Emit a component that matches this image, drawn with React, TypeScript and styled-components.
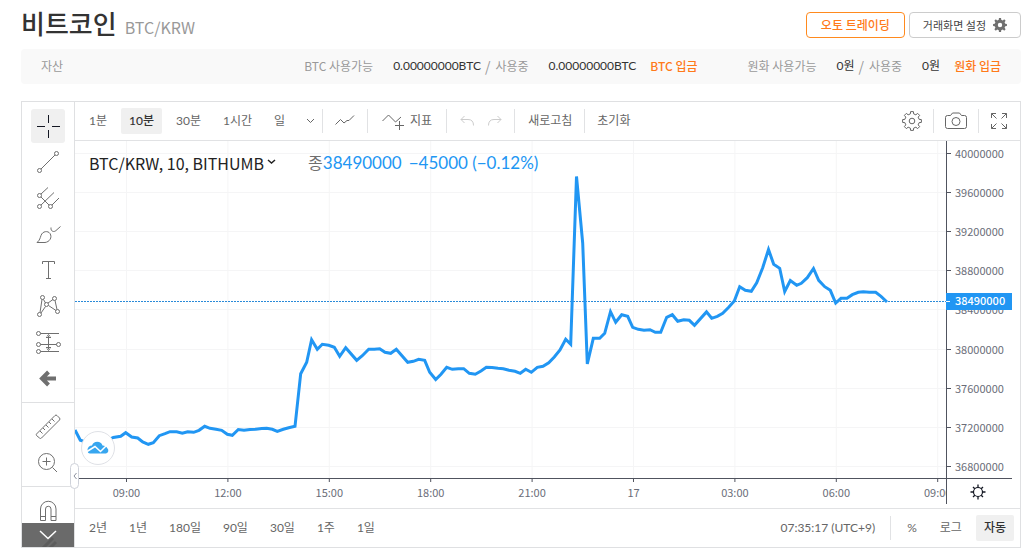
import React from "react";
import styled, { createGlobalStyle, css } from "styled-components";

const colors = {
  line: "#e1e2e4",
  frame: "#dfe0e2",
  grid: "#f5f5f6",
  icon: "#6f6f6f",
  text: "#666",
  muted: "#999",
  orange: "#ff7a1a",
  blue: "#2196f3",
  axis: "#50535e",
};

const GlobalStyle = createGlobalStyle`
  * { box-sizing: border-box; }
  body {
    margin: 0;
    background: #fff;
    color: #333;
    font: 12px/16px "Noto Sans CJK KR", "Noto Sans", sans-serif;
  }
  button { font: inherit; color: inherit; background: none; border: 0; padding: 0; cursor: pointer; }
  a { text-decoration: none; }
  svg { display: block; }
`;

const Page = styled.div`
  padding: 0 9px 12px 21px;
`;

const Header = styled.header`
  display: flex;
  align-items: center;
  justify-content: space-between;
  height: 49px;
`;

const Title = styled.h1`
  display: flex;
  align-items: baseline;
  gap: 8px;
  margin: 0;
  font-size: 26px;
  line-height: 40px;
  font-weight: 500;
  color: #333;
  small {
    font-size: 16px;
    font-weight: 400;
    color: ${colors.muted};
  }
`;

const Actions = styled.div`
  display: flex;
  gap: 4px;
`;

const OutlineButton = styled.button<{ $accent?: boolean }>`
  display: flex;
  align-items: center;
  gap: 7px;
  height: 26px;
  padding: 0 ${(p) => (p.$accent ? 14 : 13)}px;
  border: 1px solid ${(p) => (p.$accent ? "#ff8a1e" : "#ccc")};
  border-radius: 4px;
  background: #fff;
  color: ${(p) => (p.$accent ? colors.orange : "#444")};
  font-size: ${(p) => (p.$accent ? 12 : 11)}px;
  font-weight: ${(p) => (p.$accent ? 500 : 400)};
`;

const AssetBar = styled.section`
  display: flex;
  align-items: center;
  height: 35px;
  padding: 0 20px 2px;
  border-radius: 4px;
  background: #f9f9f9;
  color: ${colors.muted};
  h2 {
    margin: 0 auto 0 0;
    font-size: 12px;
    font-weight: 400;
  }
`;

const AssetGroup = styled.div`
  display: flex;
  align-items: center;
  & + & { margin-left: 50px; }
`;

const Slash = styled.span`
  margin: 0 5px 0 4px;
  font-size: 14px;
`;

const Amount = styled.strong`
  margin-left: 20px;
  font-family: Lato, "Noto Sans CJK KR", sans-serif;
  font-weight: 400;
  color: #333;
`;

const DepositLink = styled.a`
  margin-left: 14px;
  color: ${colors.orange};
  font-weight: 500;
`;

const Widget = styled.main`
  display: flex;
  margin-top: 17px;
  border: 1px solid ${colors.frame};
`;

const Tools = styled.nav`
  position: relative;
  flex: none;
  width: 53px;
  height: 445px;
  padding-top: 7px;
  overflow: hidden;
  border-right: 1px solid ${colors.frame};
`;

const ToolGroup = styled.div`
  display: flex;
  flex-direction: column;
  align-items: center;
  gap: 2px;
  padding-bottom: 7px;
  & + & {
    padding-top: 6px;
    border-top: 1px solid ${colors.frame};
  }
`;

const ToolButton = styled.button<{ $active?: boolean }>`
  display: grid;
  place-items: center;
  width: 34px;
  height: 34px;
  border-radius: 3px;
  color: ${(p) => (p.$active ? "#131722" : colors.icon)};
  background: ${(p) => (p.$active ? "#f0f0f0" : "none")};
`;

const MoreTools = styled.button`
  position: absolute;
  left: 0;
  right: 0;
  bottom: 0;
  display: grid;
  place-items: center;
  height: 24px;
  background: rgba(90, 90, 90, 0.9);
  color: #fff;
`;

const Main = styled.div`
  position: relative;
  flex: 1;
  min-width: 0;
`;

const TopBar = styled.div`
  display: flex;
  align-items: center;
  height: 39px;
  padding: 0 4px 0 6px;
  border-bottom: 1px solid ${colors.line};
  color: ${colors.text};
`;

const Intervals = styled.div`
  display: flex;
  align-items: center;
  gap: 6px;
`;

const BarButton = styled.button<{ $active?: boolean; $pad?: number }>`
  display: flex;
  align-items: center;
  gap: 6px;
  height: 26px;
  padding: 0 ${(p) => p.$pad ?? 8}px;
  border-radius: 2px;
  font-family: Lato, "Noto Sans CJK KR", sans-serif;
  font-weight: ${(p) => (p.$active ? 500 : 400)};
  color: ${(p) => (p.$active ? "#333" : colors.text)};
  background: ${(p) => (p.$active ? "#f0f0f0" : "none")};
`;

const Divider = styled.span<{ $gap?: number }>`
  width: 1px;
  height: 24px;
  margin: 0 ${(p) => p.$gap ?? 4}px;
  background: ${colors.line};
`;

const Spacer = styled.span`
  flex: 1;
`;

const PlotRow = styled.div`
  position: relative;
  display: grid;
  grid-template-columns: minmax(0, 1fr) 66px;
  grid-template-rows: 338px 29px;
  padding-right: 8px;
  svg text {
    font-family: "Noto Sans CJK KR", sans-serif;
    font-size: 11px;
    fill: #6a6d78;
  }
`;

const Legend = styled.div`
  position: absolute;
  top: 10px;
  left: 14px;
  display: flex;
  align-items: center;
  font-family: Lato, "Noto Sans CJK KR", sans-serif;
  font-size: 17px;
  line-height: 24px;
  color: ${colors.blue};
  white-space: pre;
`;

const SymbolButton = styled.button`
  display: flex;
  align-items: center;
  gap: 3px;
  margin-right: 32px;
  font-family: "Noto Sans CJK KR", sans-serif;
  font-size: 16px;
  color: #222;
`;

const CloseLabel = styled.span`
  font-size: 16px;
  color: ${colors.icon};
`;

const Change = styled.span`
  margin-left: 7px;
`;

const LogoBadge = styled.a`
  position: absolute;
  left: 6px;
  top: 290px;
  display: grid;
  place-items: center;
  width: 34px;
  height: 34px;
  border: 1px solid #dfe1e6;
  border-radius: 50%;
  background: #fff;
`;

const CollapseHandle = styled.button`
  position: absolute;
  left: -5px;
  top: 361px;
  display: grid;
  place-items: center;
  width: 9px;
  height: 26px;
  border: 1px solid #cfd2da;
  border-radius: 5px;
  background: #fff;
  color: #8a8f9c;
`;

const AxisSettings = styled.button`
  display: grid;
  place-items: center;
  padding-right: 3px;
  color: #131722;
`;

const BottomBar = styled.div`
  display: flex;
  align-items: center;
  height: 39px;
  padding: 0 6px;
  border-top: 1px solid ${colors.line};
  color: ${colors.text};
`;

const iconBase = css`
  fill: none;
  stroke: currentColor;
`;

const Drawing = styled.svg`
  ${iconBase}
`;

type IconProps = { w?: number; h?: number; children: React.ReactNode };

const Icon = ({ w = 28, h = 28, children }: IconProps) => (
  <Drawing width={w} height={h} viewBox={`0 0 ${w} ${h}`} aria-hidden="true">
    {children}
  </Drawing>
);

const cogPath = (c: number, teeth: number, outer: number, inner: number) => {
  const pts: string[] = [];
  const step = (Math.PI * 2) / teeth;
  for (let i = 0; i < teeth; i++) {
    const a = i * step - Math.PI / 2;
    [
      [-0.29, inner],
      [-0.19, outer],
      [0.19, outer],
      [0.29, inner],
    ].forEach(([k, r]) => {
      pts.push(`${(c + r * Math.cos(a + k * step)).toFixed(2)} ${(c + r * Math.sin(a + k * step)).toFixed(2)}`);
    });
  }
  return `M${pts.join("L")}Z`;
};

const tools: { name: string; icon: React.ReactNode }[][] = [
  [
    { name: "십자선", icon: <path d="M14.5 3v8M14.5 18v8M3 14.5h8M18 14.5h8" /> },
    {
      name: "추세줄",
      icon: (
        <>
          <circle cx="5.5" cy="22.5" r="2" />
          <circle cx="22.5" cy="5.5" r="2" />
          <path d="M7 21L21 7" />
        </>
      ),
    },
    {
      name: "피치포크",
      icon: (
        <>
          <circle cx="5.5" cy="11.5" r="2" />
          <circle cx="5.5" cy="22.5" r="2" />
          <circle cx="16.5" cy="22.5" r="2" />
          <path d="M7 10l7-6.5M7 21L20 8.5M7 13l8 8M18 21l7-7" />
        </>
      ),
    },
    {
      name: "브러시",
      icon: (
        <path d="M3 22.500C6 20 6 18 7 15.500C8.500 11 14 10.500 16 13.500C18.500 17.500 15.500 22 11 22.500ZM17 7.500C16.500 11.500 20 12.500 22 10.500L26.500 6.500" />
      ),
    },
    { name: "텍스트", icon: <path d="M8.500 8V5.500h12V8M14.500 5.500v17M12 22.500h5" /> },
    {
      name: "패턴",
      icon: (
        <>
          <circle cx="5.500" cy="22.500" r="2" />
          <circle cx="8.500" cy="5.500" r="2" />
          <circle cx="12.500" cy="12.500" r="2" />
          <circle cx="20.500" cy="6.500" r="2" />
          <circle cx="23.500" cy="19.500" r="2" />
          <path d="M6 20.500L8 7.500M9.500 7.500l2 3.500M14 11l5-3.500M21 8.500l2 9M14.500 13.500l7.500 5M7 21l4.500-6.500" />
        </>
      ),
    },
    {
      name: "예측",
      icon: (
        <>
          <circle cx="4.500" cy="5.500" r="2" />
          <circle cx="4.500" cy="16.500" r="2" />
          <circle cx="24.500" cy="16.500" r="2" />
          <circle cx="4.500" cy="23.500" r="2" />
          <path d="M6.500 5.500H25M6.500 16.500h16M6.500 23.500H25M14.500 8v13M12 9.500h5M13 8.500l1.500-2 1.500 2M12 19.500h5M13 20.500l1.500 2 1.500-2" />
        </>
      ),
    },
    {
      name: "뒤로",
      icon: <path d="M14.500 8L8 14.500l6.500 6.500M9 14.500h13" strokeWidth="4" />,
    },
  ],
  [
    {
      name: "자",
      icon: (
        <path d="M2.500 22L21 3.500Q22 2.500 23 3.500L25.500 6Q26.500 7 25.500 8L7.500 26Q6.500 27 5.500 26L2.500 23.500Q2 22.500 2.500 22ZM6 19l2.500 2.500M9 16l2 2M12 13l2.500 2.500M15 10l2 2M18 7l2.500 2.500" />
      ),
    },
    {
      name: "확대",
      icon: (
        <>
          <circle cx="12.500" cy="13.500" r="8" />
          <path d="M18.500 19.500l4.500 4.500M12.500 9.500v8M8.500 13.500h8" />
        </>
      ),
    },
  ],
  [
    {
      name: "자석",
      icon: (
        <path d="M6.500 24.500V13a7.500 7.500 0 0 1 15.500 0v11.500h-5V13a2.700 2.700 0 0 0-5.500 0v11.500ZM6.500 20.500h5M17 20.500h5" />
      ),
    },
    { name: "그리기 유지", icon: <path d="M3 22L19 6M7 25L22 10" strokeWidth="3" /> },
  ],
];

const series: [number, number][] = [
  [75, 430], [80.3, 440.3], [86, 442], [92, 444], [98, 443], [103, 442], [108, 440], [113.3, 437.5], [120.7, 436.3],
  [125.7, 432.7], [131.7, 437], [137.7, 438], [142.7, 442], [148.3, 444.3], [153.3, 442.7],
  [159.3, 435.7], [165, 433.7], [170, 431.7], [176.7, 431.7], [182.3, 433.3], [187.7, 431.7],
  [193.7, 432.3], [199, 430.3], [204.7, 426.3], [210, 428.3], [216, 429.3], [221.7, 430.3],
  [227.3, 434.3], [232.3, 435.3], [238.3, 429.5], [244, 430.3], [250, 429.5], [255.7, 429.3],
  [261.7, 428.4], [266.7, 428.3], [272.3, 429.3], [277.3, 431.3], [283.3, 429.3], [288.7, 427.7],
  [295, 426.3], [300.7, 373.7], [306.7, 362.3], [311.6, 339.7], [317.3, 349.3], [322.3, 344.3],
  [328.7, 345.3], [334.3, 347.3], [339.7, 356.3], [345.7, 347.7], [356.7, 360.3], [362.3, 355.7],
  [368.7, 349.3], [374.3, 349.3], [379.7, 348.7], [385, 352.3], [390.7, 353.3], [396.3, 349.3],
  [407.7, 362.3], [413.3, 361.3], [418.7, 359.3], [424.7, 360.3], [429.7, 372.3], [435.7, 379.5],
  [441, 374.3], [446.7, 367.3], [452.3, 369.3], [458.3, 368.7], [463.7, 368.7], [469.3, 373.3],
  [475.3, 374.3], [481, 371], [486.3, 367.3], [492, 367.5], [498, 368.3], [503.3, 368.7], [509, 370.3],
  [515, 371.3], [520.3, 373.3], [525.7, 369.3], [531.3, 372.3], [537.3, 367.3], [543, 366.3],
  [548.7, 362.7], [554.3, 357], [560, 350], [565.7, 339.3], [570.7, 344.3], [576.5, 176.5],
  [582.7, 243], [587.3, 364], [593.3, 338.3], [599.7, 338.3], [604.7, 333.3], [610.5, 311.7],
  [615.7, 322.3], [621.7, 314.7], [627.7, 316.3], [632.7, 327.3], [638.3, 329.3], [644, 330.3],
  [650, 329.7], [655.3, 332.3], [660.7, 332.3], [666.7, 317.3], [672.3, 314.7], [677.7, 321.3],
  [683.7, 319.7], [689.3, 320.3], [694.5, 325.3], [706.5, 311.9], [711.7, 318.3], [717.3, 316.3],
  [722.7, 313.3], [728.7, 307.3], [734.3, 301], [739.7, 286.7], [745.3, 290.3], [751.3, 291.3],
  [756.7, 282.7], [762.7, 267.7], [768.5, 249.5], [773.7, 264.3], [779.7, 268.3], [784.7, 291.5],
  [790.3, 280.5], [796.7, 285.3], [801.3, 283.3], [807.3, 277.7], [813.5, 268.5], [818.7, 280.3],
  [824.7, 286.7], [830.3, 290.3], [835.7, 303], [841, 298.3], [847, 298.3], [852.3, 294.7],
  [858.3, 292.3], [863.3, 291.7], [869.3, 292.3], [875.7, 292.3], [881, 296.3], [887, 302],
];

const PLOT_W = 871;
const times = ["09:00", "12:00", "15:00", "18:00", "21:00", "17", "03:00", "06:00", "09:00"].map((label, i) => ({
  label,
  x: `${((51.5 + i * 101.4) / PLOT_W) * 100}%`,
}));
const prices = Array.from({ length: 9 }, (_, i) => ({
  label: String(40000000 - i * 400000),
  y: Math.round(12 + i * 39.1) + 0.5,
}));

const Plot = () => (
  <svg width="100%" height="338" role="img" aria-label="BTC/KRW 10분 차트">
    {prices.map((p) => (
      <line key={p.label} x1="0" x2="100%" y1={p.y} y2={p.y} stroke={colors.grid} />
    ))}
    {times.map((t, i) => (
      <line key={i} x1={t.x} x2={t.x} y1="0" y2="338" stroke={colors.grid} />
    ))}
    <line x1="0" x2="100%" y1="160.5" y2="160.5" stroke="#2a8ad8" strokeDasharray="2 1" />
    <svg width="100%" height="337" viewBox="75 141 871 337" preserveAspectRatio="none">
      <polyline
        points={series.map((p) => p.join(",")).join(" ")}
        fill="none"
        stroke={colors.blue}
        strokeWidth="3"
        strokeMiterlimit="4"
        vectorEffect="non-scaling-stroke"
      />
    </svg>
    <line x1="0" x2="100%" y1="337.5" y2="337.5" stroke={colors.axis} />
  </svg>
);

const PriceAxis = () => (
  <svg width="66" height="338">
    <path d="M0.5 0V338M0 337.5H66" stroke={colors.axis} />
    {prices.map((p) => (
      <g key={p.label}>
        <line x1="1" x2="5" y1={p.y} y2={p.y} stroke={colors.axis} />
        <text x="9" y={p.y + 4}>{p.label}</text>
      </g>
    ))}
    <rect y="152" width="66" height="17" fill={colors.blue} />
    <line x1="0" x2="4" y1="160.5" y2="160.5" stroke="#fff" />
    <text x="9" y="164" style={{ fill: "#fff", fontWeight: 500 }}>38490000</text>
  </svg>
);

const TimeAxis = () => (
  <svg width="100%" height="29">
    {times.map((t, i) => (
      <g key={i}>
        <line x1={t.x} x2={t.x} y1="0" y2="3" stroke={colors.axis} />
        <text x={t.x} y="18" textAnchor="middle">{t.label}</text>
      </g>
    ))}
  </svg>
);

const AxisCorner = styled.div`
  display: grid;
  height: 25px;
  border-left: 1px solid ${colors.axis};
`;

export default function App() {
  return (
    <>
      <GlobalStyle />
      <Page>
        <Header>
          <Title>
            비트코인 <small>BTC/KRW</small>
          </Title>
          <Actions>
            <OutlineButton $accent>오토 트레이딩</OutlineButton>
            <OutlineButton>
              거래화면 설정
              <svg width="14" height="14" viewBox="0 0 14 14" aria-hidden="true">
                <path
                  d={`${cogPath(7, 8, 7, 5.4)}M7 4.800a2.200 2.200 0 1 0 0 4.400a2.200 2.200 0 1 0 0-4.400Z`}
                  fill="#707070"
                  fillRule="evenodd"
                />
              </svg>
            </OutlineButton>
          </Actions>
        </Header>

        <AssetBar>
          <h2>자산</h2>
          <AssetGroup>
            <span>BTC 사용가능</span>
            <Amount>0.00000000BTC</Amount>
            <Slash>/</Slash>
            <span>사용중</span>
            <Amount>0.00000000BTC</Amount>
            <DepositLink href="#btc">BTC 입금</DepositLink>
          </AssetGroup>
          <AssetGroup>
            <span>원화 사용가능</span>
            <Amount>0원</Amount>
            <Slash>/</Slash>
            <span>사용중</span>
            <Amount>0원</Amount>
            <DepositLink href="#krw">원화 입금</DepositLink>
          </AssetGroup>
        </AssetBar>

        <Widget>
          <Tools aria-label="그리기 도구">
            {tools.map((group, g) => (
              <ToolGroup key={g}>
                {group.map((tool, i) => (
                  <ToolButton key={tool.name} aria-label={tool.name} $active={g === 0 && i === 0}>
                    <Icon>{tool.icon}</Icon>
                  </ToolButton>
                ))}
              </ToolGroup>
            ))}
            <MoreTools aria-label="더 보기">
              <Icon w={18} h={10}>
                <path d="M1 1l8 7.500L17 1" strokeWidth="1.500" />
              </Icon>
            </MoreTools>
          </Tools>

          <Main>
            <TopBar>
              <Intervals>
                {["1분", "10분", "30분", "1시간", "일"].map((label) => (
                  <BarButton key={label} $active={label === "10분"}>
                    {label}
                  </BarButton>
                ))}
                <BarButton aria-label="시간 간격" $pad={7}>
                  <Icon w={9} h={6}>
                    <path d="M1 1l3.500 3.500L8 1" />
                  </Icon>
                </BarButton>
              </Intervals>
              <Divider $gap={0} />
              <BarButton aria-label="차트 스타일">
                <Icon w={28} h={20}>
                  <path d="M4.500 13.500l5-5 3.500 3.500 3-2.500h2l5-5" />
                </Icon>
              </BarButton>
              <Divider $gap={0} />
              <BarButton $pad={14}>
                <Icon w={22} h={20}>
                  <path d="M.5 10l6-6 7 7 5.500-5M17.500 10v9M13 14.500h9" />
                </Icon>
                지표
              </BarButton>
              <Divider $gap={0} />
              <BarButton aria-label="실행 취소" $pad={13}>
                <Icon w={14} h={12}>
                  <path d="M4.500 1L1 4.500 4.500 8M1 4.500h7q5.500 0 5.500 6" stroke="#ccc" />
                </Icon>
              </BarButton>
              <BarButton aria-label="다시 실행" $pad={1}>
                <Icon w={14} h={12}>
                  <path d="M9.500 1L13 4.500 9.500 8M13 4.500H6Q.5 4.500.5 10.500" stroke="#ccc" />
                </Icon>
              </BarButton>
              <Divider $gap={11} />
              <BarButton $pad={2}>새로고침</BarButton>
              <Divider $gap={10} />
              <BarButton $pad={2}>초기화</BarButton>
              <Spacer />
              <BarButton aria-label="설정">
                <Icon w={20} h={20}>
                  <path d={cogPath(10, 8, 9.5, 7.3)} strokeLinejoin="round" />
                  <circle cx="10" cy="10" r="2.800" />
                </Icon>
              </BarButton>
              <Divider $gap={3} />
              <BarButton aria-label="스냅샷">
                <Icon w={22} h={18}>
                  <path d="M2.500 3.500h3l2-2.500h7l2 2.500h3q2 0 2 2v9q0 2-2 2h-17q-2 0-2-2v-9q0-2 2-2Z" />
                  <circle cx="11" cy="9.500" r="4" />
                </Icon>
              </BarButton>
              <Divider $gap={3} />
              <BarButton aria-label="전체 화면">
                <Icon w={18} h={18}>
                  <path d="M1.500 6V1.500H6M1.500 1.500l5 5M12 1.500h4.500V6M16.500 1.500l-5 5M1.500 12v4.500H6M1.500 16.500l5-5M12 16.500h4.500V12M16.500 16.500l-5-5" />
                </Icon>
              </BarButton>
            </TopBar>

            <PlotRow>
              <Plot />
              <PriceAxis />
              <TimeAxis />
              <AxisCorner>
                <AxisSettings aria-label="축 설정">
                  <Icon w={16} h={16}>
                    <circle cx="8" cy="8" r="4.500" strokeWidth="1.200" />
                    <path
                      d="M8 .5v3M8 12.500v3M.5 8h3M12.500 8h3M3 3l1.800 1.800M11.200 11.200L13 13M3 13l1.800-1.800M11.200 4.800L13 3"
                      strokeWidth="1.300"
                    />
                  </Icon>
                </AxisSettings>
              </AxisCorner>
              <Legend>
                <SymbolButton>
                  BTC/KRW, 10, BITHUMB
                  <Icon w={9} h={10}>
                    <path d="M1 2l3.500 3L8 2" strokeWidth="1.500" />
                  </Icon>
                </SymbolButton>
                <CloseLabel>종</CloseLabel>
                <span>38490000</span>
                <Change>−45000 (−0.12%)</Change>
              </Legend>
              <LogoBadge href="#tradingview" aria-label="TradingView">
                <svg width="22" height="14" viewBox="0 0 22 14" aria-hidden="true">
                  <path
                    d="M3 12.500H19A3 3 0 0 0 20.500 7.500Q19 4.500 15.500 4.500A5.600 5.600 0 0 0 5 4.500A4.500 4.500 0 0 0 .5 9Q.5 12.500 3 12.500Z"
                    fill="#37a6ef"
                  />
                  <path d="M0 10.500L8 5.500l5.500 5L20 4" fill="none" stroke="#fff" strokeWidth="1.500" />
                </svg>
              </LogoBadge>
            </PlotRow>
            <CollapseHandle aria-label="도구 모음 숨기기">
              <Icon w={4} h={8}>
                <path d="M3.500 1L1 4l2.500 3" />
              </Icon>
            </CollapseHandle>

            <BottomBar>
              <Intervals>
                {["2년", "1년", "180일", "90일", "30일", "1주", "1일"].map((label) => (
                  <BarButton key={label}>{label}</BarButton>
                ))}
              </Intervals>
              <Spacer />
              <BarButton>07:35:17 (UTC+9)</BarButton>
              <Divider $gap={7} />
              <Intervals>
                <BarButton $pad={9}>%</BarButton>
                <BarButton>로그</BarButton>
                <BarButton $active>자동</BarButton>
              </Intervals>
            </BottomBar>
          </Main>
        </Widget>
      </Page>
    </>
  );
}
